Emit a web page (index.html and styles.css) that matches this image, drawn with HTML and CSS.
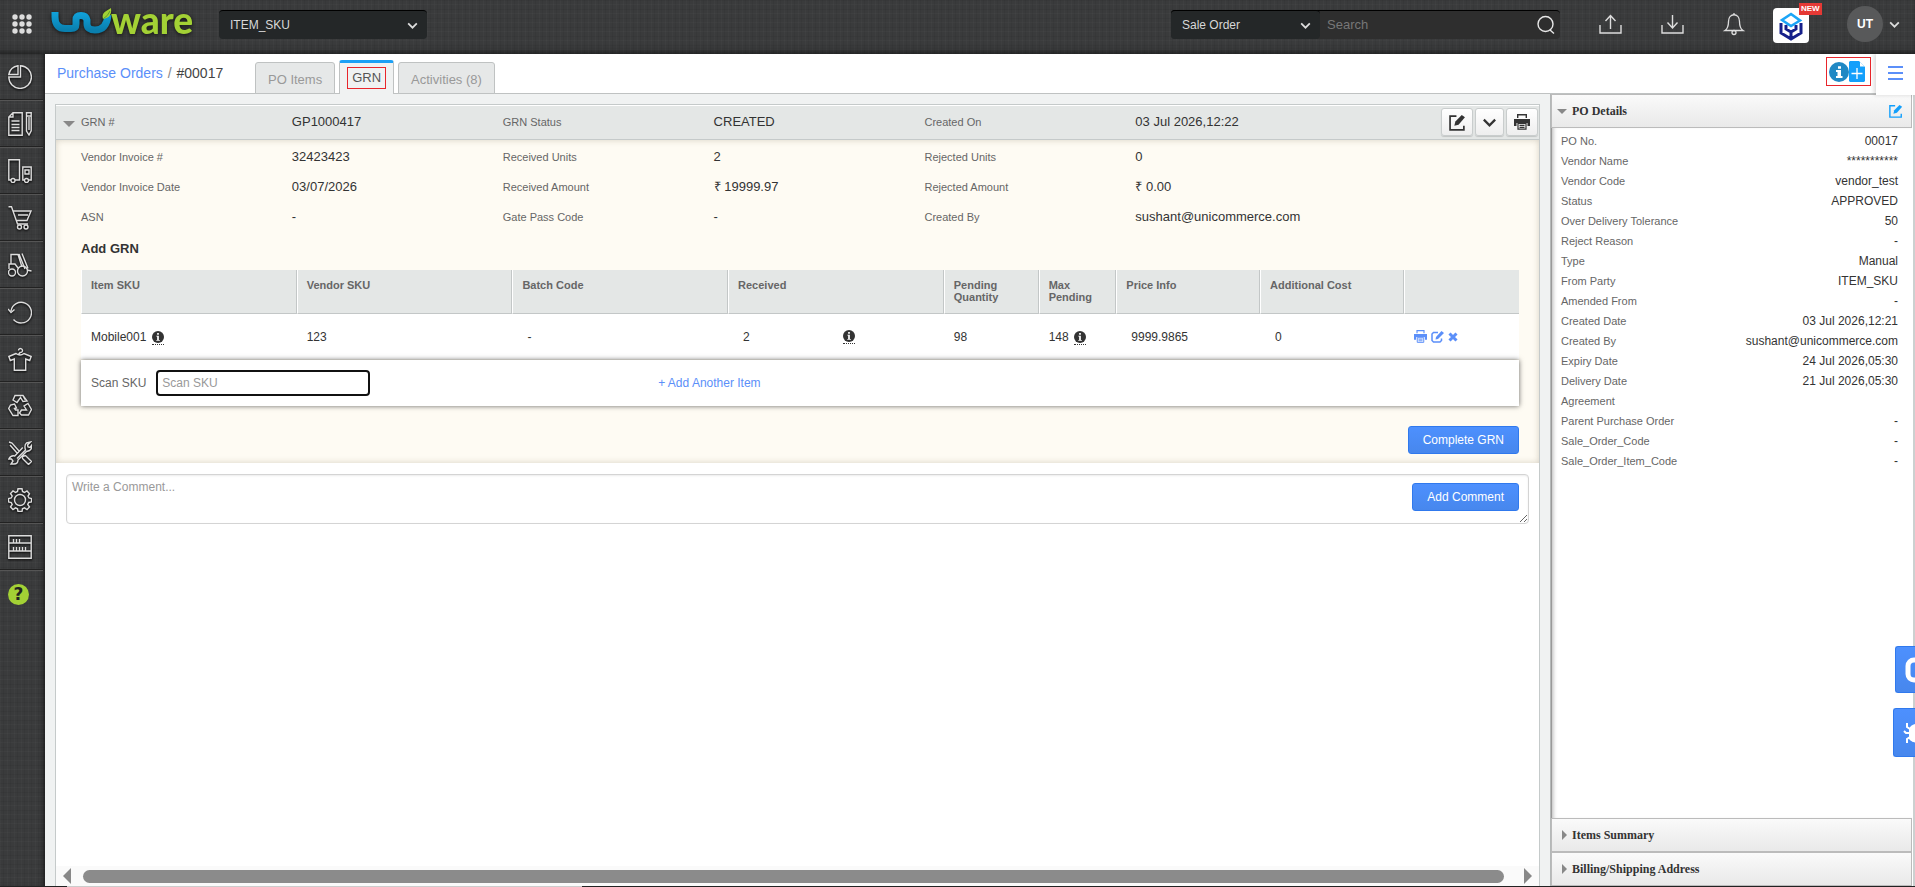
FILE: index.html
```html
<!DOCTYPE html>
<html lang="en">
<head>
<meta charset="utf-8">
<title>Purchase Orders</title>
<link rel="stylesheet" href="styles.css">
</head>
<body>
<svg width="0" height="0" class="defs" aria-hidden="true">
  <symbol id="chev" viewBox="0 0 12 12"><path d="M2 4l4 4 4-4" fill="none" stroke="currentColor" stroke-width="1.6"/></symbol>
  <symbol id="edit" viewBox="0 0 16 16"><path d="M7 2H1v13h13v-4" fill="none" stroke="currentColor" stroke-width="1.6"/><path d="M5 11l1-4 6-6 3 2-6 7z" fill="currentColor"/></symbol>
  <symbol id="print" viewBox="0 0 16 16"><path d="M3.7 4V.8h8.600V4" fill="none" stroke="currentColor" stroke-width="1.400"/><path d="M0 5h16v7h-2.500V9h-11v3H0z" fill="currentColor"/><path d="M4 9.500h8v5.700H4zM5.500 11.300h5M5.500 13.300h5" fill="none" stroke="currentColor" stroke-width="1.200"/></symbol>
  <symbol id="info" viewBox="0 0 14 14"><circle cx="7" cy="7" r="7" fill="currentColor"/><path d="M5 5.500h3v5h1.200v1H5v-1h1v-4H5zM6 2.300h2v2H6z" fill="#fff"/></symbol>
</svg>

<header class="top">
  <button class="ico apps" aria-label="Apps"><svg width="22" height="22" viewBox="0 0 22 22" fill="#ddd"><circle cx="4" cy="4" r="2.700"/><circle cx="11" cy="4" r="2.700"/><circle cx="18" cy="4" r="2.700"/><circle cx="4" cy="11" r="2.700"/><circle cx="11" cy="11" r="2.700"/><circle cx="18" cy="11" r="2.700"/><circle cx="4" cy="18" r="2.700"/><circle cx="11" cy="18" r="2.700"/><circle cx="18" cy="18" r="2.700"/></svg></button>
  <a class="logo" href="#" aria-label="Uniware">
    <svg width="64" height="34" viewBox="0 0 64 34">
      <defs><linearGradient id="sw" x1="0" y1="0" x2="0" y2="1"><stop offset="0" stop-color="#11a3dc"/><stop offset="1" stop-color="#0a7fae"/></linearGradient></defs>
      <path d="M4 5V10C4 18 8 21.500 14 21.500H20Q25 21.500 25 17V13Q25 8.500 30 8.500T36 13V17C36 21 39 23 44 23 51 23 56 19 57 8" fill="none" stroke="url(#sw)" stroke-width="7"/>
      <path d="M52 12C50 5 56 4 60 1c1 7-2 10-8 11z" fill="#a3d135"/>
      <path d="M52 12q5-3 7-8" stroke="#5c9e2e" fill="none"/>
    </svg>
    <span class="logo-text">ware</span>
  </a>
  <label class="combo facility"><select aria-label="Facility"><option>ITEM_SKU</option></select><svg width="13" height="13"><use href="#chev"/></svg></label>
  <div class="spacer"></div>
  <div class="search">
    <label class="combo kind"><select aria-label="Search type"><option>Sale Order</option></select><svg width="13" height="13"><use href="#chev"/></svg></label>
    <input type="search" placeholder="Search" aria-label="Search">
    <button class="ico" aria-label="Go"><svg width="20" height="20" viewBox="0 0 20 20" fill="none" stroke="#e8e8e8" stroke-width="1.400"><circle cx="9.500" cy="9" r="7.500"/><path d="M14 15l4 3.500"/></svg></button>
  </div>
  <nav class="tools" aria-label="Tools">
    <button class="ico" aria-label="Upload"><svg width="24" height="22" viewBox="0 0 24 22" fill="none" stroke="#ddd" stroke-width="1.400"><path d="M1 12v8h21v-8M11.500 16V3M6.500 8l5-5.500 5 5.500"/></svg></button>
    <button class="ico" aria-label="Download"><svg width="24" height="22" viewBox="0 0 24 22" fill="none" stroke="#ddd" stroke-width="1.400"><path d="M1 12v8h21v-8M11.500 2v13M6.500 9.500l5 5.500 5-5.500"/></svg></button>
    <button class="ico" aria-label="Notifications"><svg width="22" height="24" viewBox="0 0 22 24" fill="none" stroke="#ddd" stroke-width="1.300"><path d="M2 18.500c3-2 3.500-5 3.500-9 0-9 11-9 11 0 0 4 .5 7 3.500 9z"/><circle cx="11" cy="20.500" r="2"/><path d="M11 3V1"/></svg></button>
    <button class="ico cube" aria-label="New app"><svg width="26" height="30" viewBox="0 0 26 30" fill="none" stroke-width="3"><path d="M3 12v10l10 6 10-6V12M8 14v4l5 3 5-3v-4M13 20v7" stroke="#16208a"/><path d="M8 12l5 3 9-5.500L13 3 4 9l9 6" stroke="#1ba5f7" stroke-width="2.600"/></svg><span class="new">NEW</span></button>
    <button class="avatar">UT</button>
    <svg class="more" width="13" height="13"><use href="#chev"/></svg>
  </nav>
</header>

<div class="shell">
  <nav class="rail" aria-label="Main">
    <a href="#" aria-label="Dashboard"><svg viewBox="0 0 24 24"><path d="M12.500.8A11.300 11.300 0 1 1 .8 12h11.700z"/><path d="M.8 9.500A11 11 0 0 1 10 .8v8.700z"/></svg></a>
    <a href="#" aria-label="Orders"><svg viewBox="0 0 24 24"><path d="M5 .8h9.200v22.400H.8V5zM5 .8V5H.8M3.500 9h8M3.500 12.500h8M3.500 15.500h8M3.500 18.500h8M18.500.8h4.700v18L21 23l-2.500-4zM18.500 4h4.700M21 5v13"/></svg></a>
    <a href="#" aria-label="Shipments"><svg viewBox="0 0 24 24"><path d="M3 21H.8V.8h10.700V21H7M16 21h-1.200V8h8.400v13h-2.500M17 11h4v4h-4z"/><circle cx="5" cy="21.500" r="2"/><circle cx="18.500" cy="21.500" r="2"/></svg></a>
    <a href="#" aria-label="Cart"><svg viewBox="0 0 24 24"><path d="M.5.800h3L9.500 18H20M5 5h18l-4 9.500H8.500M10 9h10"/><circle cx="11.500" cy="21" r="2"/><circle cx="18" cy="21" r="2"/></svg></a>
    <a href="#" aria-label="Warehouse"><svg viewBox="0 0 24 24"><path d="M1 16V11h2V1.500h7L14 14M3 11h4l3 4M11 1l6 15M14 .5l6 15M19 17l4.500 1"/><circle cx="4" cy="19.500" r="3.500"/><circle cx="14.500" cy="18" r="5"/></svg></a>
    <a href="#" aria-label="Returns"><svg viewBox="0 0 24 24"><path d="M3 11a10.300 10.300 0 1 1 2.500 8.500M0 9l3 3.500L6.500 9.500"/></svg></a>
    <a href="#" aria-label="Catalog"><svg viewBox="0 0 24 24"><path d="M10.500 3.500a2 2 0 1 1 1.500 2l-1.500 2M8 6.500L.8 9.500l1.500 4 4-1.500v11.200h11.400V12l4 1.500 1.500-4L16 6.500q-4 3-8 0z"/></svg></a>
    <a href="#" aria-label="Recycle"><svg viewBox="0 0 24 24"><path d="M7 1.500h8l4 5.500-4 .5-2.500-4L9 8.500 5 6zM20 9.500l3.500 6-3 5.500h-7l-2-2 2-3h5L16 12zM10 16v5.500H5L.7 14.500 2.500 11l4-1 2 4-2 .5 1 1.500zM15 1.500l2 4"/></svg></a>
    <a href="#" aria-label="Tools"><svg viewBox="0 0 24 24"><path d="M1 1l3 1 7 8M2 4l7 8M14.500 15.500l3-1 6 6-3 3-6-6zM9 17.500L17.500 9q-1.500-5 1-7l4-1-3 3 .5 2 2 .5 1.500-2q1 5-5 6L10 19q0 4-4 4H3l2-3-1.500-2L.8 18q2-4 6-3l8-8.500"/></svg></a>
    <a href="#" aria-label="Settings"><svg viewBox="0 0 24 24"><path d="M9.500 3.500L10 .8h4l.5 2.700 2 1L19 3l2.500 2.700-1.500 2.300 1 2 2.500.5v3.500L20.700 14.500l-1 2L21.500 19 19 21.500l-2.500-1.700-2 1L14 23.500h-4l-.5-2.700-2-1L5 21.500 2.500 19l1.700-2.500-1-2L.5 14v-3.500L3.200 10l1-2L2.500 5.500 5 3l2.500 1.500z"/><circle cx="12" cy="12" r="5.500"/></svg></a>
    <a href="#" aria-label="Inventory"><svg viewBox="0 0 24 24"><path d="M.8.800h22.400v22.400H.8zM1 8h22M1 16h22M5.500 4v4M8.500 4v4M11.500 4v4M5.500 12v4M8.500 12v4M11.500 12v4M14.500 12v4M17.500 12v4"/></svg></a>
    <a href="#" class="help" aria-label="Help"><span>?</span></a>
  </nav>

  <div class="page">
    <div class="title">
      <div class="crumb"><a href="#">Purchase Orders</a> <i>/</i> #00017</div>
      <div class="tabs" role="tablist">
        <button role="tab">PO Items</button>
        <button role="tab" class="on" aria-selected="true"><span>GRN</span></button>
        <button role="tab">Activities (8)</button>
      </div>
      <div class="spacer"></div>
      <div class="marked">
        <button class="ico" aria-label="Information"><svg width="20" height="20" viewBox="0 0 20 20"><circle cx="10" cy="10" r="10" fill="#2088c4"/><path d="M7 8h5v6h1.500v2h-6.500v-2H8.500v-4H7zM9 4.200h3v2.500H9z" fill="#fff"/></svg></button>
        <button class="ico" aria-label="New document"><svg width="16" height="21" viewBox="0 0 16 21"><path d="M1 0h9l6 6v14l-1 1H1l-1-1V1z" fill="#139ffb"/><path d="M11 1V5.500h4.500z" fill="#fff"/><path d="M2.500 12.500h11M8 7v11" stroke="#fff" stroke-width="1.300"/></svg></button>
      </div>
      <button class="ico burger" aria-label="Menu"><span></span><span></span><span></span></button>
    </div>

    <div class="work">
      <main class="card">
        <div class="fields head">
          <span class="tri"></span>
          <span class="k">GRN #</span><span class="v">GP1000417</span>
          <span class="k">GRN Status</span><span class="v">CREATED</span>
          <span class="k">Created On</span><span class="v">03 Jul 2026,12:22</span>
          <div class="acts">
            <button aria-label="Edit"><svg width="17" height="17"><use href="#edit"/></svg></button>
            <button class="slim" aria-label="More"><svg width="17" height="17"><use href="#chev"/></svg></button>
            <button aria-label="Print"><svg width="16" height="16"><use href="#print"/></svg></button>
          </div>
        </div>
        <section class="cream">
          <div class="fields">
            <span class="k">Vendor Invoice #</span><span class="v">32423423</span>
            <span class="k">Received Units</span><span class="v">2</span>
            <span class="k">Rejected Units</span><span class="v">0</span>
            <span class="k">Vendor Invoice Date</span><span class="v">03/07/2026</span>
            <span class="k">Received Amount</span><span class="v">₹ 19999.97</span>
            <span class="k">Rejected Amount</span><span class="v">₹ 0.00</span>
            <span class="k">ASN</span><span class="v">-</span>
            <span class="k">Gate Pass Code</span><span class="v">-</span>
            <span class="k">Created By</span><span class="v">sushant@unicommerce.com</span>
          </div>
          <div class="inner">
            <h2>Add GRN</h2>
            <table>
              <colgroup><col class="c15"><col class="c15"><col class="c15"><col class="c15"><col class="cq"><col class="cm"><col class="c10"><col class="c10"><col></colgroup>
              <thead><tr><th>Item SKU</th><th>Vendor SKU</th><th>Batch Code</th><th>Received</th><th>Pending Quantity</th><th>Max Pending</th><th>Price Info</th><th>Additional Cost</th><th></th></tr></thead>
              <tbody><tr>
                <td>Mobile001 <span class="tip"><svg width="12" height="12"><use href="#info"/></svg></span></td>
                <td>123</td><td class="in">-</td>
                <td class="in"><span class="recv">2 <span class="tip"><svg width="12" height="12"><use href="#info"/></svg></span></span></td>
                <td>98</td>
                <td>148 <span class="tip"><svg width="12" height="12"><use href="#info"/></svg></span></td>
                <td class="in">9999.9865</td><td class="in">0</td>
                <td><span class="row-acts">
                  <button class="ico" aria-label="Print item"><svg width="13" height="13"><use href="#print"/></svg></button>
                  <button class="ico" aria-label="Edit item"><svg width="13" height="12" viewBox="0 0 13 12"><path d="M7 1.500H2.500L1 3v6.500L2.500 11H9l1.500-1.500V7.500" fill="none" stroke="currentColor" stroke-width="1.500"/><path d="M4.500 8.500L5 6l5.500-6L13 2 7 8z" fill="currentColor"/></svg></button>
                  <button class="ico" aria-label="Remove item"><svg width="10" height="10" viewBox="0 0 10 10"><path d="M1.500 1.500l7 7M8.500 1.500l-7 7" stroke="currentColor" stroke-width="3"/></svg></button>
                </span></td>
              </tr></tbody>
            </table>
            <div class="scan">
              <div class="scan-in"><label for="sku">Scan SKU</label><input id="sku" type="text" placeholder="Scan SKU" autofocus></div>
              <a href="#">+ Add Another Item</a>
            </div>
            <div class="done"><button class="blue">Complete GRN</button></div>
          </div>
        </section>
        <div class="comment">
          <textarea placeholder="Write a Comment..." aria-label="Write a comment"></textarea>
          <button class="blue">Add Comment</button>
        </div>
        <div class="hbar"><span class="left"></span><div class="thumb"></div><span class="right"></span></div>
      </main>

      <aside class="side">
        <h3><span class="tri"></span>PO Details<button class="ico" aria-label="Edit details"><svg width="14" height="14"><use href="#edit"/></svg></button></h3>
        <dl>
          <div><dt>PO No.</dt><dd>00017</dd></div>
          <div><dt>Vendor Name</dt><dd>***********</dd></div>
          <div><dt>Vendor Code</dt><dd>vendor_test</dd></div>
          <div><dt>Status</dt><dd>APPROVED</dd></div>
          <div><dt>Over Delivery Tolerance</dt><dd>50</dd></div>
          <div><dt>Reject Reason</dt><dd>-</dd></div>
          <div><dt>Type</dt><dd>Manual</dd></div>
          <div><dt>From Party</dt><dd>ITEM_SKU</dd></div>
          <div><dt>Amended From</dt><dd>-</dd></div>
          <div><dt>Created Date</dt><dd>03 Jul 2026,12:21</dd></div>
          <div><dt>Created By</dt><dd>sushant@unicommerce.com</dd></div>
          <div><dt>Expiry Date</dt><dd>24 Jul 2026,05:30</dd></div>
          <div><dt>Delivery Date</dt><dd>21 Jul 2026,05:30</dd></div>
          <div><dt>Agreement</dt><dd></dd></div>
          <div><dt>Parent Purchase Order</dt><dd>-</dd></div>
          <div><dt>Sale_Order_Code</dt><dd>-</dd></div>
          <div><dt>Sale_Order_Item_Code</dt><dd>-</dd></div>
        </dl>
        <h3><span class="tri shut"></span>Items Summary</h3>
        <h3><span class="tri shut"></span>Billing/Shipping Address</h3>
      </aside>
    </div>
  </div>
</div>
<div class="base"></div>

<div class="float">
  <button class="blue chat" aria-label="Chat"><svg width="30" height="26" viewBox="0 0 30 26"><rect x="3" y="3" width="22" height="20" rx="6" fill="none" stroke="#fff" stroke-width="5"/></svg></button>
  <button class="blue bug" aria-label="Report a bug"><svg width="30" height="26" viewBox="0 0 30 26"><path d="M6 9c2-6 12-8 16 0v10c-3 5-12 5-16 0z" fill="#fff"/><path d="M7 9L4 7V3M7 13H3L1 11M7 17l-3 2v4" fill="none" stroke="#fff" stroke-width="2"/></svg></button>
</div>
</body>
</html>
```

FILE: styles.css
```css
* { box-sizing: border-box; }
html, body { height: 100%; }
body {
  margin: 0;
  display: flex;
  flex-direction: column;
  overflow: hidden;
  font: 12px/16px "Liberation Sans", Arial, sans-serif;
  color: #333;
  background-color: #3a3b3c;
  background-image:
    repeating-linear-gradient(90deg, rgba(255,255,255,.02) 0 1px, transparent 1px 3px, rgba(0,0,0,.05) 3px 4px, transparent 4px 7px),
    repeating-linear-gradient(0deg, rgba(255,255,255,.02) 0 1px, transparent 1px 4px, rgba(0,0,0,.05) 4px 5px, transparent 5px 9px);
}
.defs { position: absolute; }
a { color: #5b8ff9; text-decoration: none; }
button, input, select, textarea { font: inherit; color: inherit; margin: 0; }
button { cursor: pointer; }
svg { display: block; }
.ico { border: 0; padding: 0; background: none; flex: none; }
.spacer { flex: 1; }

.top { flex: none; height: 54px; display: flex; align-items: center; padding: 0 14px 6px 11px; box-shadow: inset 0 -6px 6px -4px rgba(0,0,0,.5); }
.logo { display: flex; align-items: center; width: 142px; margin-left: 18px; filter: drop-shadow(0 1px 2px #111); }
.logo-text { font: 900 37px/48px Lato, sans-serif; color: #a3d135; margin: -8px 0 0 -4px; }
.combo { position: relative; display: block; }
.combo select { appearance: none; width: 100%; height: 29px; padding: 0 11px; border: 0; border-top: 1px solid #000; border-radius: 4px; background: #242728; color: #d8d8d8; }
.combo svg { position: absolute; right: 8px; top: 9px; color: #ddd; pointer-events: none; }
.facility { width: 208px; margin-left: 26px; }
.search { display: flex; align-items: center; width: 389px; height: 29px; padding-right: 4px; background: #2e2e2e; border-top: 1px solid #000; border-radius: 4px; }
.kind { width: 149px; margin-top: -1px; }
.search input { flex: 1; min-width: 0; height: 28px; border: 0; padding: 0 7px; outline: 0; background: none; font-size: 13px; }
.search input::placeholder { color: #777; }
.tools { display: flex; align-items: center; margin-left: 39px; gap: 38px; }
.cube { position: relative; width: 36px; height: 35px; padding-left: 5px; border-radius: 4px; background: #fff; margin-left: -10px; margin-top: 3px; }
.new { position: absolute; left: 26px; top: -5px; padding: 0 2px; font: bold 8px/12px "Liberation Sans", sans-serif; color: #fff; background: #e53935; }
.avatar { width: 36px; height: 36px; padding: 0; border: 0; border-radius: 50%; background: #58595a; color: #fff; font-weight: bold; }
.more { color: #ddd; margin-left: -33px; }

.shell { flex: 1; min-height: 0; display: flex; }
.rail { flex: none; width: 45px; padding-right: 2px; box-shadow: inset -4px 0 4px -2px rgba(0,0,0,.5); }
.rail a { display: flex; align-items: center; height: 47px; padding-left: 8px; border-bottom: 1px solid #555; box-shadow: inset 0 -1px #222; }
.rail svg { width: 24px; height: 24px; fill: none; stroke: #ddd; stroke-width: 1.4; filter: drop-shadow(0 1px 1px #000); }
.rail .help { border: 0; box-shadow: none; }
.help span { width: 21px; height: 21px; border-radius: 50%; background: #a3d135; color: #222; font: bold 17px/21px "DejaVu Sans", sans-serif; text-align: center; }

.page { flex: 1; min-width: 0; display: flex; flex-direction: column; background: #f0f2f2; }
.title { flex: none; position: relative; display: flex; height: 40px; padding-left: 12px; background: #fff; border-bottom: 1px solid #bfc2c2; }
.crumb { width: 198px; padding-top: 11px; font-size: 14px; color: #444; }
.crumb i { font-style: normal; color: #888; margin: 0 1px; }
.tabs { display: flex; align-items: flex-end; gap: 4px; margin-bottom: -1px; }
.tabs button { height: 32px; padding: 4px 12px 0; border: 1px solid #bfc2c2; border-radius: 3px 3px 0 0; background: #e6e8e8; color: #999; font-size: 13px; }
.tabs .on { height: 34px; padding: 0 7px 2px; border-top: 3px solid #1ca0f5; border-bottom: 0; background: #f0f2f2; color: #555; }
.on span { display: block; padding: 2px 4px; border: 1px solid #e8262c; }
.marked { display: flex; align-items: center; width: 45px; height: 29px; margin: 3px 5px 0 0; padding-left: 2px; border: 1px solid #e8262c; }
.burger { display: flex; flex-direction: column; gap: 4px; width: 39px; height: 41px; padding: 12px 12px 0; background: #fff; box-shadow: -2px 0 4px rgba(0,0,0,.15); }
.burger span { height: 2px; width: 15px; background: #5b8ff9; }

.work { flex: 1; min-height: 0; display: flex; }
.card { flex: 1; min-width: 0; display: flex; flex-direction: column; margin: 10px 10px 0; border: 1px solid #c5caca; border-bottom: 0; background: #fff; }
.fields { position: relative; display: grid; grid-template-columns: repeat(6, minmax(0, 1fr)); grid-auto-rows: 30px; align-items: center; padding: 0 13% 0 25px; }
.k { font-size: 11px; color: #666; }
.v { font-size: 13px; white-space: nowrap; }
.head { grid-auto-rows: 32px; height: 35px; border-top: 1px solid #fff; border-bottom: 1px solid #c5caca; background: #e4e7e6; }
.tri { border: 6px solid transparent; border-top-color: #888; border-bottom: 0; }
.head .tri { position: absolute; left: 7px; top: 15px; }
.acts { position: absolute; right: 1px; top: 2px; display: flex; gap: 2px; }
.acts button { display: flex; align-items: center; justify-content: center; width: 32px; height: 28px; padding: 0; border: 1px solid #c9cdcd; border-radius: 3px; background: linear-gradient(#fff, #eee); box-shadow: 0 1px 1px rgba(0,0,0,.15); }
.acts .slim { width: 29px; }
.cream { padding-top: 2px; background: #fefbf3; box-shadow: inset 0 0 6px rgba(120,110,80,.3); }
.inner { padding: 0 20px 0 25px; }
h2 { margin: 0; padding: 9px 0 13px; font-size: 13px; line-height: 16px; }
table { width: 100%; table-layout: fixed; border-collapse: separate; border-spacing: 0; }
.c15 { width: 15%; } .c10 { width: 10%; } .cq { width: 6.6%; } .cm { width: 5.4%; }
th { height: 44px; padding: 9px 9px 0; vertical-align: top; text-align: left; font-size: 11px; line-height: 12px; color: #666; background: #e4e7e6; border-left: 1px solid #fff; border-right: 1px solid #c3c7c7; border-bottom: 1px solid #c3c7c7; }
th:last-child { border-right: 0; }
td { height: 45px; padding: 0 10px; background: #fff; white-space: nowrap; }
td.in { padding-left: 15px; }
.tip { display: inline-block; vertical-align: -4px; margin-left: 2px; padding-bottom: 1px; border-bottom: 1px dotted #333; }
.recv { display: flex; justify-content: space-between; align-items: center; padding-right: 79px; }
.row-acts { display: flex; align-items: center; gap: 4px; color: #5b8ff9; }
.scan { display: flex; align-items: center; height: 46px; margin-top: 1px; background: #fff; box-shadow: 0 0 5px rgba(0,0,0,.6); position: relative; }
.scan-in { display: flex; align-items: center; width: 40%; padding-left: 10px; margin-right: 2px; gap: 10px; color: #666; }
.scan input { width: 214px; height: 26px; padding: 0 4px; border: 2px solid #111; border-radius: 4px; outline: 0; background: #fff; }
.scan input::placeholder, textarea::placeholder { color: #999; }
.done { display: flex; justify-content: flex-end; padding: 20px 0 9px; }
.blue { height: 28px; padding: 0 14px; border: 1px solid #3079ed; border-radius: 3px; background: linear-gradient(#4d90fe, #4787ed); color: #fff; }
.comment { position: relative; padding: 11px 10px; }
.comment textarea { display: block; width: 100%; height: 50px; padding: 4px 5px; border: 1px solid #d4d4d4; border-radius: 4px; outline: 0; resize: vertical; box-shadow: inset 0 1px 2px rgba(0,0,0,.08); }
.comment .blue { position: absolute; right: 20px; top: 20px; }
.hbar { display: flex; align-items: center; gap: 12px; height: 20px; margin-top: auto; padding: 0 7px; background: #fafafa; }
.thumb { flex: 1; height: 13px; margin-right: 8px; border-radius: 7px; background: #8b8b8b; }
.left, .right { border: 8px solid transparent; border-right-color: #888; border-left-width: 0; }
.right { border-width: 8px 0 8px 8px; border-left-color: #888; }

.side { flex: none; width: 365px; display: flex; flex-direction: column; padding-right: 1px; border-left: 1px solid #b5b8b8; border-right: 2px solid #ccd0d0; background: #fff; }
.side h3 { flex: none; display: flex; align-items: center; gap: 5px; height: 34px; margin: 0; padding: 0 8px 0 5px; border: 1px solid #bbb; font: bold 12px/16px "Liberation Serif", serif; background: linear-gradient(#fafafa, #e9e9e9); }
.side h3 .ico { margin-left: auto; color: #139ffb; }
.side .tri { border-width: 5px 5px 0; }
.side .shut { border: 5px solid transparent; border-left-color: #888; border-right: 0; margin-left: 5px; }
.side dl { flex: 1; margin: 0; padding: 3px 14px 0 9px; border-left: 1px solid #999; box-shadow: inset 4px 0 4px -3px rgba(0,0,0,.3); }
.side dl div { display: flex; justify-content: space-between; line-height: 20px; height: 20px; }
dt { font-size: 11px; color: #666; }
dd { margin: 0; }
.base { flex: none; height: 1px; background: linear-gradient(90deg, #222 67px, #ccc 67px 582px, #222 582px); }
.float { position: fixed; right: 0; top: 646px; display: flex; flex-direction: column; align-items: flex-end; gap: 15px; }
.float .blue { width: 20px; height: 47px; padding: 0 0 0 9px; border-right: 0; border-radius: 3px 0 0 3px; overflow: hidden; }
.float .bug { width: 22px; height: 49px; }
```
